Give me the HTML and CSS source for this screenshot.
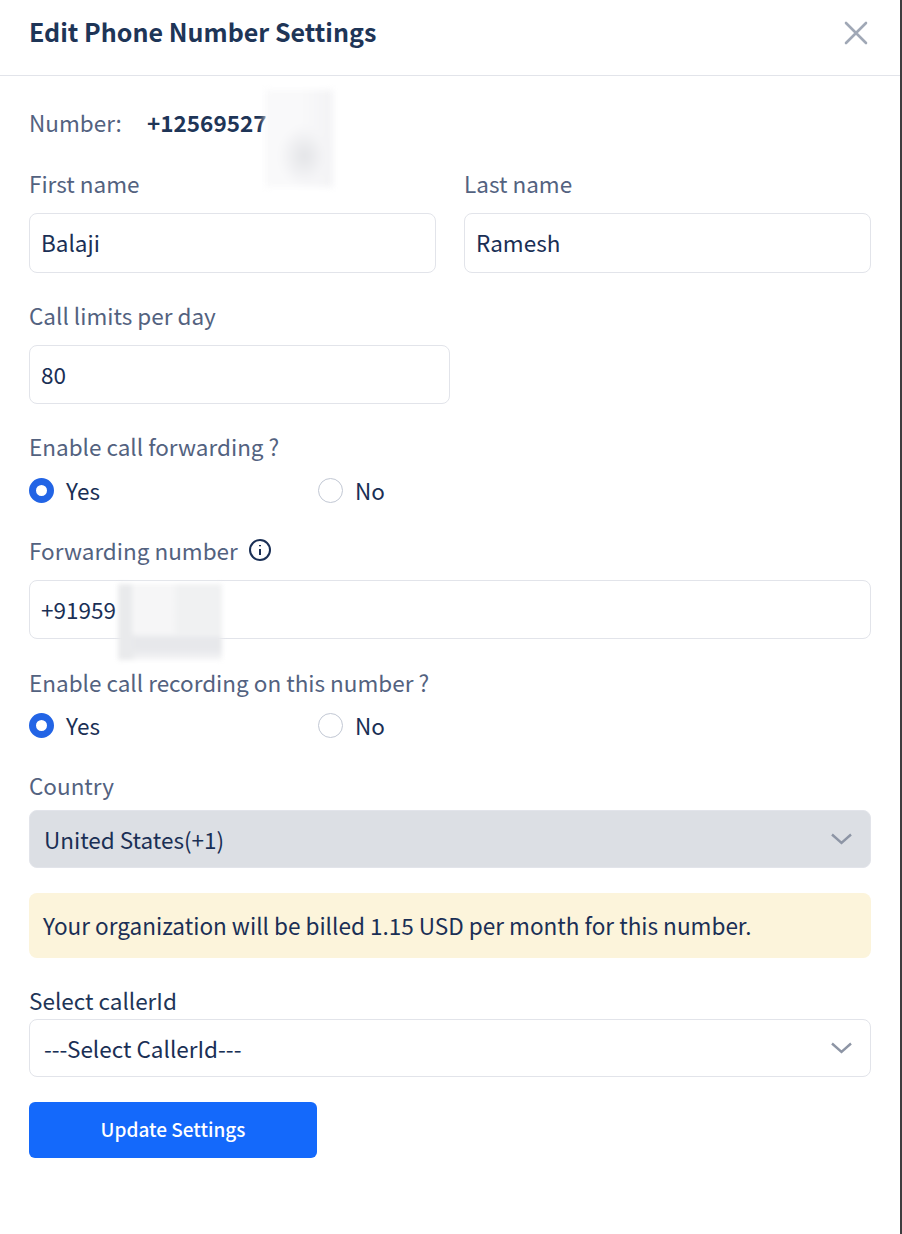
FILE: index.html
```html
<!DOCTYPE html>
<html>
<head>
    <title>Edit Phone Number Settings</title>
    <link rel="stylesheet" href="styles.css">
</head>
<body>
    <div class="panel">
        <div class="panel-header">
            <h2>Edit Phone Number Settings</h2>
            <svg class="close-icon" width="24" height="24" viewBox="0 0 24 24"><path d="M2 2 L22 22 M22 2 L2 22"/></svg>
        </div>
        <form class="panel-body">
            <div class="number-row">
                <span class="label">Number:</span>
                <strong>+12569527</strong>
                <div class="smudge smudge-number"></div>
            </div>

            <div class="name-row">
                <div>
                    <label class="label">First name</label>
                    <div class="field">Balaji</div>
                </div>
                <div>
                    <label class="label">Last name</label>
                    <div class="field">Ramesh</div>
                </div>
            </div>

            <div class="form-group limits">
                <label class="label">Call limits per day</label>
                <div class="field">80</div>
            </div>

            <div class="form-group forwarding">
                <label class="label">Enable call forwarding ?</label>
                <div class="radio-row">
                    <span class="radio-option"><span class="radio radio-on"></span>Yes</span>
                    <span class="radio-option"><span class="radio"></span>No</span>
                </div>
            </div>

            <div class="form-group forward-number">
                <label class="label label-icon">Forwarding number
                    <svg width="24" height="24" viewBox="0 0 24 24"><circle cx="12" cy="12" r="10"/><path d="M12 11v6M12 7v1.2"/></svg>
                </label>
                <div class="field">+91959<div class="smudge smudge-phone"></div></div>
            </div>

            <div class="form-group recording">
                <label class="label">Enable call recording on this number ?</label>
                <div class="radio-row">
                    <span class="radio-option"><span class="radio radio-on"></span>Yes</span>
                    <span class="radio-option"><span class="radio"></span>No</span>
                </div>
            </div>

            <div class="form-group country">
                <label class="label">Country</label>
                <div class="field select select-disabled">United States(+1)
                    <svg width="21" height="12" viewBox="0 0 21 12"><path d="M1 1.5 L10.5 10 L20 1.5"/></svg>
                </div>
            </div>

            <div class="alert">Your organization will be billed 1.15 USD per month for this number.</div>

            <div class="form-group caller">
                <label class="label label-dark">Select callerId</label>
                <div class="field select">---Select CallerId---
                    <svg width="21" height="12" viewBox="0 0 21 12"><path d="M1 1.5 L10.5 10 L20 1.5"/></svg>
                </div>
            </div>

            <button type="button" class="btn">Update Settings</button>
        </form>
    </div>
</body>
</html>
```

FILE: styles.css
```css
html, body { margin: 0; height: 100%; background: #fff; }
body { font-family: "Noto Sans CJK SC", "Noto Sans", sans-serif; color: #1a2f55; overflow: hidden; }
.panel { width: 902px; height: 1234px; box-sizing: border-box; border-right: 2px solid #3d3d3f; }
.panel-header { height: 76px; box-sizing: border-box; padding: 0 30px 0 29px; display: flex; align-items: center; justify-content: space-between; border-bottom: 1px solid #e2e4ea; }
.panel-header h2 { margin: 0 0 13px; font-size: 25.05px; line-height: 34px; font-weight: 700; color: #1e3557; }
.close-icon { margin-bottom: 10px; margin-right: 2px; }
.close-icon path { stroke: #a0a8b6; stroke-width: 2.6; stroke-linecap: round; fill: none; }
.panel-body { padding: 0 29px; display: block; }
.label { display: block; font-size: 22.5px; line-height: 28px; padding-bottom: 2px; color: #53627f; }
.number-row { display: flex; align-items: center; height: 30px; padding-top: 32px; position: relative; }
.number-row .label { width: 118px; }
.number-row strong { font-size: 22.5px; line-height: 28px; padding-bottom: 2px; font-weight: 700; color: #1e3557; }
.name-row { display: grid; grid-template-columns: 407px 407px; gap: 28px; margin-top: 31px; }
.field { height: 60px; box-sizing: border-box; margin-top: 14px; padding: 0 11px; border: 1px solid #e2e4ea; border-radius: 8px; font-size: 22.5px; line-height: 56px; color: #1a2f55; position: relative; background: #fff; }
.limits { margin-top: 28px; width: 421px; }
.limits .field { height: 59px; }
.forwarding { margin-top: 28px; }
.radio-row { display: flex; margin-top: 12px; }
.radio-option { width: 289px; display: flex; align-items: center; font-size: 22.5px; line-height: 32px; color: #1a2f55; }
.radio { width: 25px; height: 25px; box-sizing: border-box; border: 1px solid #c2c8d4; border-radius: 50%; margin-right: 12px; background: #fff; }
.radio-on { border: 7.5px solid #2264e5; }
.forward-number { margin-top: 30px; }
.label-icon { display: flex; align-items: center; gap: 10px; }
.label-icon svg { fill: none; stroke: #1a2f55; stroke-width: 2; }
.forward-number .field { height: 59px; }
.recording { margin-top: 29px; }
.recording .radio-row { margin-top: 11px; }
.country { margin-top: 30px; }
.select { height: 58px; padding: 0 18px 0 14px; display: flex; align-items: center; justify-content: space-between; }
.select svg { fill: none; stroke: #8d95a5; stroke-width: 2.4; }
.select-disabled { background: #dcdfe4; margin-top: 9px; }
.select-disabled svg { margin-top: 1px; margin-bottom: 1px; }
.alert { margin-top: 25px; height: 65px; box-sizing: border-box; padding: 0 14px; border-radius: 8px; background: #fcf4db; font-size: 22.56px; line-height: 65px; color: #1a2f55; }
.caller { margin-top: 28px; }
.label-dark { color: #1e3557; }
.caller .field { margin-top: 3px; }
.btn { display: block; margin-top: 25px; width: 288px; height: 56px; padding: 0 0 4px; border: none; border-radius: 6px; background: #1469fb; color: #fff; font-family: inherit; font-size: 19px; font-weight: 500; cursor: pointer; }
.smudge { position: absolute; }
.smudge-number { left: 236px; top: 14px; width: 68px; height: 97px; filter: blur(3px); background: radial-gradient(ellipse 38% 32% at 58% 68%, #e3e4e7, #f4f4f6 75%, transparent), linear-gradient(90deg, #f9f9fa 0 52%, #f3f3f5 100%); }
.smudge-phone { left: 88px; top: 3px; width: 104px; height: 76px; filter: blur(2.5px); background: linear-gradient(90deg, #e9eaec 0 12%, transparent 18%), linear-gradient(90deg, transparent 16%, #f6f6f7 18% 52%, #f0f1f2 58%), linear-gradient(#fff 0 64%, #e7e8eb 70% 86%, #f6f6f7 100%); background-size: 100% 100%, 100% 66%, 100% 100%; background-repeat: no-repeat; }
```
